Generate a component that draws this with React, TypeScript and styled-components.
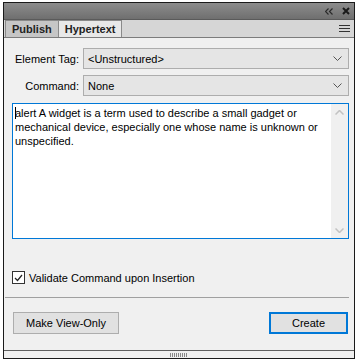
import React from "react";
import styled, { createGlobalStyle } from "styled-components";

const Global = createGlobalStyle`
  html, body { margin: 0; padding: 0; background: #ffffff; }
  body { font-family: "Liberation Sans", Arial, sans-serif; }
`;

const Page = styled.div`
  width: 358px;
  height: 361px;
  box-sizing: border-box;
  padding: 2px 3px 2px 3px;
  background: #ffffff;
`;

const Panel = styled.div`
  height: 100%;
  box-sizing: border-box;
  border: 1px solid #1a1a1a;
  display: flex;
  flex-direction: column;
  background: #f0f0f0;
`;

const TitleBar = styled.div`
  height: 16px;
  flex: none;
  background: linear-gradient(#8c8c8c, #6f6f6f);
  display: flex;
  align-items: center;
  justify-content: flex-end;
  gap: 9px;
  padding-right: 4px;
  border-bottom: 1px solid #5a5a5a;
`;

const TabStrip = styled.div`
  height: 17px;
  flex: none;
  background: #d6d6d6;
  border-bottom: 1px solid #7c7c7c;
  display: flex;
  align-items: flex-end;
  padding-left: 1px;
  padding-right: 4px;
`;

const Tab = styled.div<{ $active?: boolean }>`
  height: 17px;
  box-sizing: border-box;
  padding: 0 6px;
  display: flex;
  align-items: center;
  font-size: 11px;
  font-weight: bold;
  color: #222;
  background: ${(p) => (p.$active ? "#e8e8e8" : "#c6c6c6")};
  border-right: 1px solid #8a8a8a;
  border-left: ${(p) => (p.$active ? "none" : "1px solid #8a8a8a")};
  border-top: 1px solid #8a8a8a;
`;

const Spacer = styled.div`
  flex: 1;
`;

const MenuIcon = styled.div`
  align-self: center;
  display: flex;
  align-items: center;
`;

const Body = styled.div`
  flex: 1;
  display: flex;
  flex-direction: column;
  padding: 10px 5px 0 8px;
`;

const FieldRow = styled.div`
  display: flex;
  align-items: center;
  margin-bottom: 6px;
`;

const Label = styled.div`
  width: 71px;
  box-sizing: border-box;
  text-align: right;
  padding-right: 4px;
  font-size: 11px;
  white-space: nowrap;
  color: #000;
`;

const Select = styled.div`
  flex: 1;
  height: 21px;
  box-sizing: border-box;
  border: 1px solid #adadad;
  background: #e5e5e5;
  display: flex;
  align-items: center;
  padding: 0 6px 0 4px;
  font-size: 11px;
  color: #000;
`;

const SelectText = styled.span`
  flex: 1;
`;

const TextArea = styled.div`
  margin-top: 1px;
  height: 136px;
  box-sizing: border-box;
  border: 1px solid #0078d7;
  background: #ffffff;
  display: flex;
`;

const TextContent = styled.div`
  flex: 1;
  padding: 2px 2px 0 2px;
  font-size: 11px;
  line-height: 14px;
  color: #000;
`;

const Line = styled.div`
  white-space: nowrap;
`;

const Caret = styled.span`
  display: inline-block;
  width: 1px;
  height: 12px;
  background: #000;
  vertical-align: -2px;
  margin-right: -1px;
`;

const ScrollBar = styled.div`
  width: 17px;
  background: #f0f0f0;
  display: flex;
  flex-direction: column;
  justify-content: space-between;
  align-items: center;
  padding: 6px 0 5px;
`;

const CheckRow = styled.label`
  display: flex;
  align-items: center;
  gap: 4px;
  margin-top: 32px;
  margin-left: 0;
  font-size: 11px;
  color: #000;
`;

const CheckBox = styled.span`
  width: 11px;
  height: 11px;
  border: 1px solid #333;
  background: #fff;
  display: flex;
  align-items: center;
  justify-content: center;
`;

const Separator = styled.div`
  height: 1px;
  background: #a0a0a0;
  margin: 13px 0 0 -7px;
`;

const ButtonRow = styled.div`
  display: flex;
  justify-content: space-between;
  margin: 14px 1px 0 1px;
`;

const Button = styled.div<{ $default?: boolean }>`
  height: 22px;
  box-sizing: border-box;
  width: ${(p) => (p.$default ? "79px" : "106px")};
  border: ${(p) => (p.$default ? "2px solid #0078d7" : "1px solid #adadad")};
  background: #e1e1e1;
  display: flex;
  align-items: center;
  justify-content: center;
  font-size: 11px;
  color: #000;
`;

const Grip = styled.div`
  height: 7px;
  flex: none;
  border-top: 1px solid #5e5e5e;
  background: #efefef;
  display: flex;
  justify-content: center;
  align-items: center;
`;

export default function App() {
  return (
    <>
      <Global />
      <Page>
        <Panel>
          <TitleBar>
            <svg width="8" height="7" viewBox="0 0 8 7">
              <path d="M3.5 0.5 L0.5 3.5 L3.5 6.5 M7.5 0.5 L4.5 3.5 L7.5 6.5" stroke="#2a2a2a" strokeWidth="1.2" fill="none" />
            </svg>
            <svg width="8" height="8" viewBox="0 0 8 8">
              <path d="M1 1 L7 7 M7 1 L1 7" stroke="#1a1a1a" strokeWidth="2" fill="none" />
            </svg>
          </TitleBar>
          <TabStrip>
            <Tab>Publish</Tab>
            <Tab $active>Hypertext</Tab>
            <Spacer />
            <MenuIcon>
              <svg width="11" height="8" viewBox="0 0 11 8">
                <path d="M0 0.5 H11 M0 3.5 H11 M0 6.5 H11" stroke="#333" strokeWidth="1" />
              </svg>
            </MenuIcon>
          </TabStrip>
          <Body>
            <FieldRow>
              <Label>Element Tag:</Label>
              <Select>
                <SelectText>&lt;Unstructured&gt;</SelectText>
                <svg width="9" height="5" viewBox="0 0 9 5">
                  <path d="M0.5 0.5 L4.5 4.5 L8.5 0.5" stroke="#555" fill="none" />
                </svg>
              </Select>
            </FieldRow>
            <FieldRow>
              <Label>Command:</Label>
              <Select>
                <SelectText>None</SelectText>
                <svg width="9" height="5" viewBox="0 0 9 5">
                  <path d="M0.5 0.5 L4.5 4.5 L8.5 0.5" stroke="#555" fill="none" />
                </svg>
              </Select>
            </FieldRow>
            <TextArea>
              <TextContent>
                <Line>
                  <Caret />
                  alert A widget is a term used to describe a small gadget or
                </Line>
                <Line>mechanical device, especially one whose name is unknown or</Line>
                <Line>unspecified.</Line>
              </TextContent>
              <ScrollBar>
                <svg width="9" height="5" viewBox="0 0 9 5">
                  <path d="M0.5 4.5 L4.5 0.5 L8.5 4.5" stroke="#c2c2c2" strokeWidth="1.5" fill="none" />
                </svg>
                <svg width="9" height="5" viewBox="0 0 9 5">
                  <path d="M0.5 0.5 L4.5 4.5 L8.5 0.5" stroke="#c2c2c2" strokeWidth="1.5" fill="none" />
                </svg>
              </ScrollBar>
            </TextArea>
            <CheckRow>
              <CheckBox>
                <svg width="9" height="8" viewBox="0 0 9 8">
                  <path d="M1 4 L3.5 6.5 L8 1" stroke="#222" strokeWidth="1.2" fill="none" />
                </svg>
              </CheckBox>
              Validate Command upon Insertion
            </CheckRow>
            <Separator />
            <ButtonRow>
              <Button>Make View-Only</Button>
              <Button $default>Create</Button>
            </ButtonRow>
          </Body>
          <Grip>
            <svg width="18" height="4" viewBox="0 0 18 4">
              <path d="M0.5 0 V4 M2.5 0 V4 M4.5 0 V4 M6.5 0 V4 M8.5 0 V4 M10.5 0 V4 M12.5 0 V4 M14.5 0 V4 M16.5 0 V4" stroke="#888" strokeWidth="1" />
            </svg>
          </Grip>
        </Panel>
      </Page>
    </>
  );
}
